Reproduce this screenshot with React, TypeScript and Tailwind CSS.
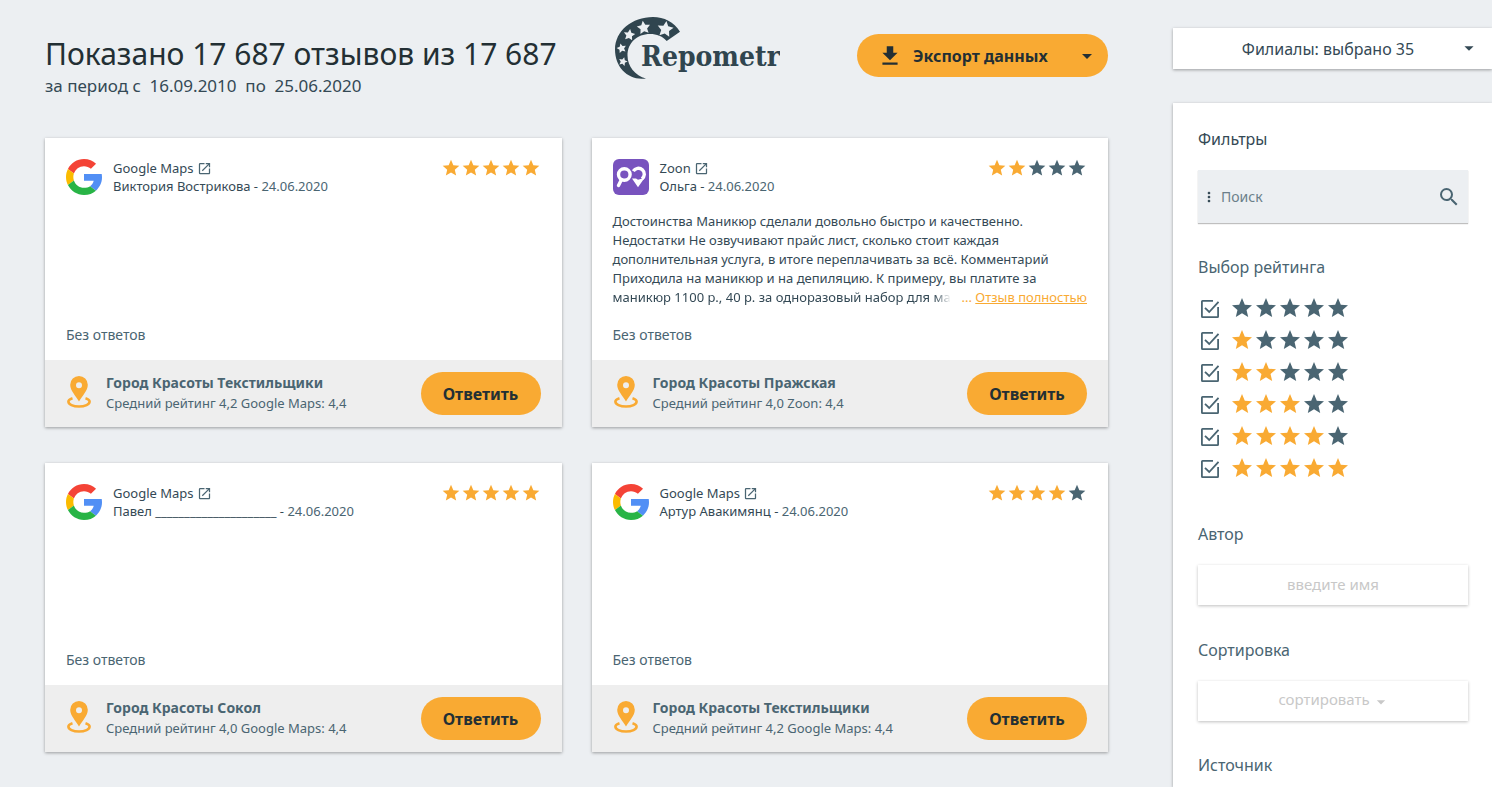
import type { ReactNode } from 'react'
import { MdArrowDropDown, MdMoreVert, MdOpenInNew, MdSearch, MdStar } from 'react-icons/md'

interface Review {
  id: number
  source: 'Google Maps' | 'Zoon'
  author: string
  date: string
  rating: number
  text?: string
  lastLine?: string
  branch: string
  summary: string
}

const reviews: Review[] = [
  {
    id: 1,
    source: 'Google Maps',
    author: 'Виктория Вострикова',
    date: '24.06.2020',
    rating: 5,
    branch: 'Город Красоты Текстильщики',
    summary: 'Средний рейтинг 4,2 Google Maps: 4,4',
  },
  {
    id: 2,
    source: 'Zoon',
    author: 'Ольга',
    date: '24.06.2020',
    rating: 2,
    text: [
      'Достоинства Маникюр сделали довольно быстро и качественно.',
      'Недостатки Не озвучивают прайс лист, сколько стоит каждая',
      'дополнительная услуга, в итоге переплачивать за всё. Комментарий',
      'Приходила на маникюр и на депиляцию. К примеру, вы платите за',
    ].join('\n'),
    lastLine: 'маникюр 1100 р., 40 р. за одноразовый набор для ма',
    branch: 'Город Красоты Пражская',
    summary: 'Средний рейтинг 4,0 Zoon: 4,4',
  },
  {
    id: 3,
    source: 'Google Maps',
    author: 'Павел _____________________',
    date: '24.06.2020',
    rating: 5,
    branch: 'Город Красоты Сокол',
    summary: 'Средний рейтинг 4,0 Google Maps: 4,4',
  },
  {
    id: 4,
    source: 'Google Maps',
    author: 'Артур Авакимянц',
    date: '24.06.2020',
    rating: 4,
    branch: 'Город Красоты Текстильщики',
    summary: 'Средний рейтинг 4,2 Google Maps: 4,4',
  },
]

const STAR = 'M0 -1 L.29 -.4 L.95 -.31 L.47 .15 L.59 .81 L0 .5 L-.59 .81 L-.47 .15 L-.95 -.31 L-.29 -.4 Z'

function RepometrLogo() {
  return (
    <svg width="166" height="64" viewBox="14 11 166 64" role="img" aria-label="Repometr">
      <path
        fill="#30454f"
        d="M46 73.4C29 76 15 63 15 44.5 15 26 32 12 53 12c11 0 21 5 27 14.7L66.7 36C62 31 57 29 50 29c-13 0-22.5 9-22.5 21.5C27.5 61 35 71 46 73.4z"
      />
      <g fill="#eceff2">
        <path transform="translate(65.3 24.3) rotate(8) scale(8.4)" d={STAR} />
        <path transform="translate(43.7 22.8) rotate(-8) scale(7)" d={STAR} />
        <path transform="translate(29.3 30) rotate(8) scale(6)" d={STAR} />
        <path transform="translate(21.6 43.4) rotate(-14) scale(5)" d={STAR} />
        <path transform="translate(23 56.6) rotate(16) scale(4.6)" d={STAR} />
      </g>
      <text x="41" y="61" fill="#30454f" fontSize="28" fontWeight="700" fontFamily="'DejaVu Serif Condensed', serif">
        Repometr
      </text>
    </svg>
  )
}

function GoogleLogo() {
  return (
    <svg className="size-9 shrink-0" viewBox="0 0 48 48" aria-hidden="true">
      <path fill="#f44336" d="M24 9.5c3.54 0 6.71 1.22 9.21 3.6l6.85-6.85C35.9 2.38 30.47 0 24 0 14.62 0 6.51 5.38 2.56 13.22l7.98 6.19C12.43 13.72 17.74 9.5 24 9.5z" />
      <path fill="#518ff5" d="M48 24.55c0-1.57-.15-3.09-.38-4.55H24v9.02h12.94c-.58 2.96-2.26 5.48-4.78 7.18l7.73 6c4.51-4.18 8.11-10.36 8.11-17.65z" />
      <path fill="#fbbb00" d="M10.53 28.59c-.48-1.45-.76-2.99-.76-4.59s.27-3.14.76-4.59l-7.98-6.19C.92 16.46 0 20.12 0 24c0 3.88.92 7.54 2.56 10.78l7.97-6.19z" />
      <path fill="#28b446" d="M24 48c6.48 0 11.93-2.13 15.89-5.81l-7.73-6c-2.15 1.45-4.92 2.3-8.16 2.3-6.26 0-11.57-4.22-13.47-9.91l-7.98 6.19C6.51 42.62 14.62 48 24 48z" />
    </svg>
  )
}

function ZoonLogo() {
  return (
    <svg className="size-9 shrink-0" viewBox="0 0 36 36" aria-hidden="true">
      <rect width="36" height="36" rx="6" fill="#7853be" />
      <g fill="none" stroke="#fff" strokeWidth="3.4">
        <circle cx="11.3" cy="15.5" r="5.8" />
        <path d="M8.5 20.5 5.5 26.500" strokeLinecap="round" />
        <path d="M20.3 12.2a5.9 5.9 0 1 1 8.600 7.700" />
      </g>
      <path fill="#fff" d="M19 19.5h4l2 1.200 6.500-1.700-6.500 9.200z" />
    </svg>
  )
}

function PinIcon() {
  return (
    <svg className="mt-1 h-8 w-[26px] shrink-0" viewBox="0 0 26 32" aria-hidden="true">
      <path
        fill="#f9aa33"
        fillRule="evenodd"
        d="M13 0a8.8 8.8 0 0 0-8.8 8.8C4.2 15 10 20 13 25.5c3-5.5 8.800-10.500 8.800-16.700A8.800 8.800 0 0 0 13 0zm0 6.200a3 3 0 1 1 0 6 3 3 0 0 1 0-6z"
      />
      <path
        fill="none"
        stroke="#f9aa33"
        strokeWidth="2.6"
        d="M6.500 22.200c-2.500.8-4.100 2-4.100 3.400 0 2.800 4.600 4.900 10.600 4.900s10.600-2.100 10.600-4.900c0-1.400-1.600-2.600-4.100-3.400"
      />
    </svg>
  )
}

function DownloadIcon() {
  return (
    <svg className="size-[26px]" viewBox="0 0 24 24" fill="currentColor" aria-hidden="true">
      <path d="M19 9h-4V3H9v6H5l7 7 7-7zM5 18v2h14v-2H5z" />
    </svg>
  )
}

function Stars({ rating, size }: { rating: number; size: 'sm' | 'md' }) {
  return (
    <span className="flex" role="img" aria-label={`Оценка ${rating} из 5`}>
      {[1, 2, 3, 4, 5].map((n) => (
        <MdStar
          key={n}
          className={`${size === 'sm' ? 'size-5' : 'size-6'} ${n <= rating ? 'text-[#f9aa33]' : 'text-[#4a6572]'}`}
        />
      ))}
    </span>
  )
}

function ReviewCard({ review }: { review: Review }) {
  return (
    <article className="flex h-[289px] flex-col bg-white shadow-[0_1px_3px_rgba(0,0,0,0.35)]">
      <div className="flex flex-1 flex-col px-[21px] pt-5 pb-4">
        <header className="flex items-start gap-[11px]">
          <div className="pt-px">{review.source === 'Zoon' ? <ZoonLogo /> : <GoogleLogo />}</div>
          <div className="flex-1 text-[13px] leading-[18px] text-[#344955]">
            <a href="#source" className="flex items-center gap-[3px] pt-px">
              {review.source}
              <MdOpenInNew className="size-[15px] text-[#4a6572]" />
            </a>
            <p>
              {review.author} - <span className="text-[#4a6572]">{review.date}</span>
            </p>
          </div>
          <Stars rating={review.rating} size="sm" />
        </header>

        {review.text && (
          <div className="mt-[17px] text-[13px] leading-[19px] text-[#344955]">
            <p className="whitespace-pre">{review.text}</p>
            <div className="flex justify-between">
              <p className="mask-r-from-95% whitespace-pre">{review.lastLine}</p>
              <p className="whitespace-pre text-[#f9aa33]">
                {'... '}
                <a href="#review" className="underline">
                  Отзыв полностью
                </a>
              </p>
            </div>
          </div>
        )}

        <p className="mt-auto text-sm leading-[18px] text-[#4a6572]">Без ответов</p>
      </div>

      <footer className="flex h-[67px] items-start bg-[#eee] px-[21px] pt-3">
        <PinIcon />
        <div className="ml-[14px] flex-1 text-[#4a6572]">
          <h3 className="text-sm leading-[21px] font-bold">{review.branch}</h3>
          <p className="text-[13px] leading-[21px]">{review.summary}</p>
        </div>
        <button type="button" className="h-[43px] w-[120px] rounded-full bg-[#f9aa33] font-bold text-[#232f34]">
          Ответить
        </button>
      </footer>
    </article>
  )
}

function RatingCheckbox({ rating }: { rating: number }) {
  return (
    <label className="flex h-8 items-center gap-[11px] pl-[3px]">
      <span className="grid pt-0.5">
        <input type="checkbox" defaultChecked className="size-[18px] appearance-none [grid-area:1/1]" />
        <svg
          className="pointer-events-none size-[18px] text-[#4a6572] [grid-area:1/1]"
          viewBox="0 0 18 18"
          fill="none"
          stroke="currentColor"
          strokeWidth="1.8"
          aria-hidden="true"
        >
          <path d="M12 .9H1.500a.6.6 0 0 0-.6.6v15a.6.6 0 0 0 .6.6h15a.6.6 0 0 0 .6-.6V7" />
          <path d="m4 7.800 4.200 4.200L17.500 1.900" />
        </svg>
      </span>
      <Stars rating={rating} size="md" />
    </label>
  )
}

function FilterTitle({ children, htmlFor }: { children: ReactNode; htmlFor?: string }) {
  return (
    <label htmlFor={htmlFor} className="block text-base leading-6 text-[#4a6572]">
      {children}
    </label>
  )
}

export default function App() {
  return (
    <div className="flex h-screen overflow-hidden bg-[#eceff2] font-['Noto_Sans',sans-serif] text-base text-[#344955]">
      <main className="min-w-0 flex-1 pr-[65px] pl-[45px]">
        {/* Page header */}
        <div className="flex h-[138px] items-start justify-between">
          <div className="pt-[34px]">
            <h1 className="text-[30px] leading-10 whitespace-nowrap text-[#232f34]">Показано 17 687 отзывов из 17 687</h1>
            <p className="text-[17px] leading-6 whitespace-pre">за период с  16.09.2010  по  25.06.2020</p>
          </div>
          <div className="pt-4 pr-5">
            <RepometrLogo />
          </div>
          <div className="pt-[34px]">
            <button
              type="button"
              className="flex h-[43px] w-[251px] items-center rounded-full bg-[#f9aa33] pl-5 font-bold text-[#232f34]"
            >
              <DownloadIcon />
              <span className="flex-1 pl-[10px] text-left">Экспорт данных</span>
              <MdArrowDropDown className="mr-[9px] size-6" />
            </button>
          </div>
        </div>

        {/* Reviews */}
        <div className="grid grid-cols-2 gap-x-[30px] gap-y-9">
          {reviews.map((r) => (
            <ReviewCard key={r.id} review={r} />
          ))}
        </div>
      </main>

      <aside className="flex w-[319px] shrink-0 flex-col pt-7">
        <div className="relative h-[41px] shrink-0 bg-white shadow-[0_1px_3px_rgba(0,0,0,0.35)]">
          <select
            aria-label="Филиалы"
            className="h-full w-full appearance-none pr-[9px] text-center text-base text-[#344955] [text-align-last:center]"
          >
            <option>Филиалы: выбрано 35</option>
          </select>
          <MdArrowDropDown className="pointer-events-none absolute top-[9px] right-3 size-[22px]" />
        </div>

        <section className="mt-[34px] flex-1 bg-white pt-6 pr-6 pl-[25px] shadow-[0_1px_3px_rgba(0,0,0,0.35)]">
          <h2 className="text-base leading-6">Фильтры</h2>

          <div className="mt-[19px] flex h-[53px] items-center bg-[#eceff2] pr-[7px] pl-[3px] shadow-[0_1px_1px_rgba(0,0,0,0.25)]">
            <MdMoreVert className="size-4 text-[#344955]" />
            <input
              type="search"
              aria-label="Поиск"
              placeholder="Поиск"
              className="min-w-0 flex-1 pl-1 text-sm outline-none placeholder:text-[#6b7f8a]"
            />
            <button type="button" aria-label="Найти">
              <MdSearch className="size-6 text-[#4a6572]" />
            </button>
          </div>

          <fieldset className="mt-8">
            <legend className="text-base leading-6 text-[#4a6572]">Выбор рейтинга</legend>
            <div className="mt-[13px]">
              {[0, 1, 2, 3, 4, 5].map((n) => (
                <RatingCheckbox key={n} rating={n} />
              ))}
            </div>
          </fieldset>

          <div className="mt-[38px]">
            <FilterTitle htmlFor="author">Автор</FilterTitle>
            <input
              id="author"
              type="text"
              placeholder="введите имя"
              className="mt-[19px] block h-10 w-full pb-[3px] text-center text-[15px] shadow-[0_1px_3px_rgba(0,0,0,0.25)] outline-none placeholder:text-[#c8c8c8]"
            />
          </div>

          <div className="mt-[33px]">
            <FilterTitle htmlFor="sort">Сортировка</FilterTitle>
            <div className="relative mt-[19px] h-10 shadow-[0_1px_3px_rgba(0,0,0,0.25)]">
              <select
                id="sort"
                className="h-full w-full appearance-none pr-[18px] pb-[3px] text-center text-[15px] text-[#c8c8c8] [text-align-last:center]"
              >
                <option>сортировать</option>
              </select>
              <MdArrowDropDown className="pointer-events-none absolute top-[11px] right-[77px] size-5 text-[#c8c8c8]" />
            </div>
          </div>

          <div className="mt-8">
            <FilterTitle>Источник</FilterTitle>
          </div>
        </section>
      </aside>
    </div>
  )
}
